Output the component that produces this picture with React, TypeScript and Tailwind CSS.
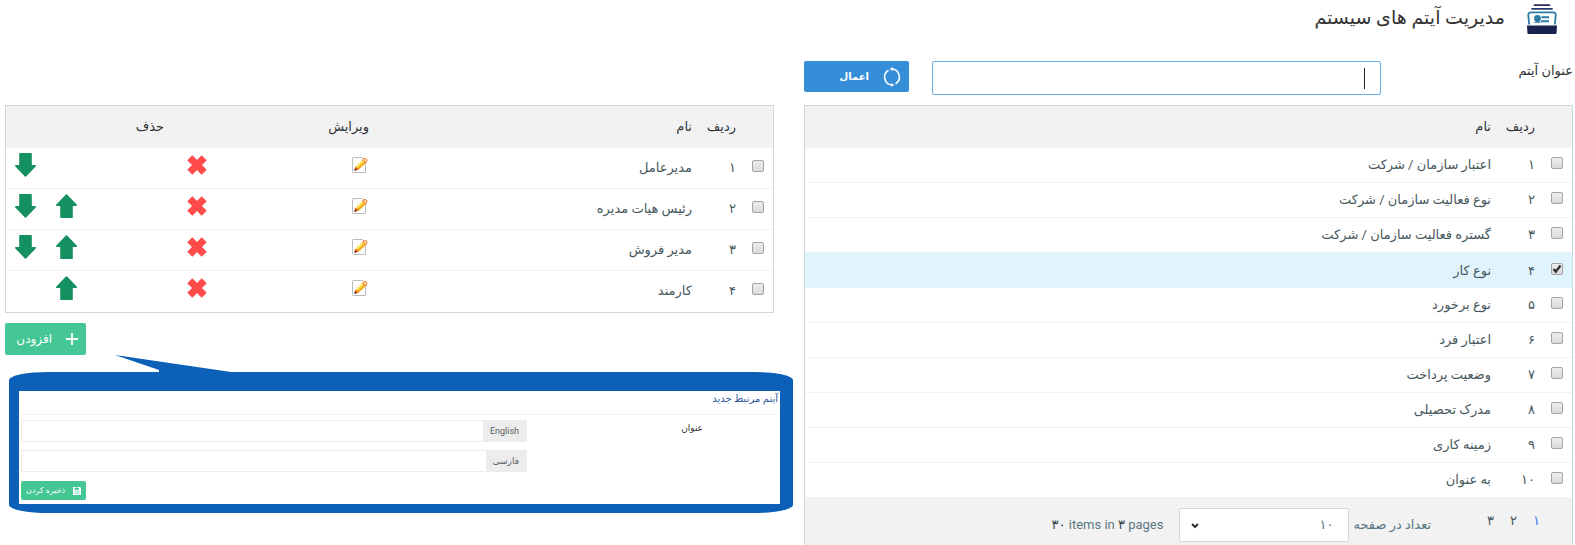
import { useState } from 'react';
import type { ReactNode } from 'react';

const items = [
  { no: '۱', name: 'اعتبار سازمان / شرکت' },
  { no: '۲', name: 'نوع فعالیت سازمان / شرکت' },
  { no: '۳', name: 'گستره فعالیت سازمان / شرکت' },
  { no: '۴', name: 'نوع کار' },
  { no: '۵', name: 'نوع برخورد' },
  { no: '۶', name: 'اعتبار فرد' },
  { no: '۷', name: 'وضعیت پرداخت' },
  { no: '۸', name: 'مدرک تحصیلی' },
  { no: '۹', name: 'زمینه کاری' },
  { no: '۱۰', name: 'به عنوان' },
];

const roles = [
  { no: '۱', name: 'مدیرعامل' },
  { no: '۲', name: 'رئیس هیات مدیره' },
  { no: '۳', name: 'مدیر فروش' },
  { no: '۴', name: 'کارمند' },
];

function CardBoxIcon() {
  return (
    <svg viewBox="0 0 30 30" className="h-[30px] w-[30px]" fill="none">
      <path d="M7.5 1.200h15" stroke="#2b2d63" strokeWidth="1.800" strokeLinecap="round" />
      <path d="M5 4.800h20" stroke="#2b3a6e" strokeWidth="1.800" strokeLinecap="round" />
      <path
        d="M2.200 20.500 1.300 11.500c-.2-2 .8-3.200 2.800-3.200h21.800c2 0 3 1.200 2.800 3.200l-.9 9"
        stroke="#2a7ba7"
        strokeWidth="1.800"
      />
      <circle cx="10.500" cy="14.500" r="3.400" fill="#2a7ba7" />
      <path d="M6.800 18.800c1-2 6.400-2 7.400 0z" fill="#2a7ba7" />
      <path d="M14.500 13.200h7.500M14 17.200h8" stroke="#2a7ba7" strokeWidth="1.900" />
      <path d="M0 21.500h30l-.4 7.300c-.1.800-.5 1.200-1.300 1.200H1.700c-.8 0-1.200-.4-1.300-1.200z" fill="#17224f" />
    </svg>
  );
}

function RefreshIcon() {
  return (
    <svg viewBox="0 0 18 20" className="h-5 w-[18px]" fill="none" stroke="#fff" strokeWidth="1.6">
      <path d="M5.500 3.200A8 8 0 0 0 9 18" />
      <path d="M12.500 16.800A8 8 0 0 0 9 2" />
      <path d="M9.600 0v4L6.800 2zM8.400 20v-4l2.800 2z" fill="#fff" stroke="none" />
    </svg>
  );
}

function EditIcon() {
  return (
    <svg viewBox="0 0 16 16" className="h-4 w-4">
      <path d="M1.200.5h9.300l3 3v12H1.200a.7.7 0 0 1-.7-.7V1.200a.7.7 0 0 1 .7-.7z" fill="#fdfdfd" stroke="#bdbdbd" />
      <path d="M3.300 9.800 10.500 2.800l3.200 3.200L6.400 12.800z" fill="#fbdc3c" />
      <path d="M5 11.600 12.400 4.600l1.300 1.400L6.400 12.800z" fill="#f5a623" />
      <path d="M4.200 9.800 11 3.300" stroke="#fdf29a" strokeWidth=".9" />
      <path d="m10.500 2.800 1.300-1c.9-.6 1.900-.4 2.600.2s.8 1.700.1 2.500L13.700 6z" fill="#fbd2a0" stroke="#f0762a" strokeWidth="1" />
      <path d="M3.300 9.800 2.500 13.500l3.900-.7-1-1.900z" fill="#e2571b" />
      <path d="m2.900 11.500-.5 2.200 2.300-.4z" fill="#2b1607" />
    </svg>
  );
}

function DeleteIcon() {
  return (
    <svg viewBox="0 0 20 20" className="h-5 w-5" stroke="#ff4b49" strokeWidth="7.200">
      <path d="m2.800 2.800 14.400 14.400M17.200 2.800 2.800 17.200" />
    </svg>
  );
}

function ArrowIcon({ down }: { down?: boolean }) {
  return (
    <svg viewBox="0 0 21 24" className={down ? 'h-6 w-[21px] rotate-180' : 'h-6 w-[21px]'}>
      <path
        d="M9.900.5q.6-.6 1.200 0L20.700 10.600c.5.600.3 1.400-.5 1.400h-3.400v11c0 .7-.3 1-1 1H5.200c-.7 0-1-.3-1-1V12H.8c-.8 0-1-.8-.5-1.400z"
        fill="#159060"
      />
    </svg>
  );
}

function SaveIcon() {
  return (
    <svg viewBox="0 0 8 8" className="h-2 w-2">
      <path d="M0 0h7l1 1v7H0z" fill="#fff" />
      <path d="M2 1h3.500v1.800H2zM1.500 4.800h5M1.500 6.300h5" fill="#44c695" stroke="#44c695" strokeWidth=".6" />
    </svg>
  );
}

function Checkbox({ label, checked, onChange }: { label: string; checked?: boolean; onChange?: () => void }) {
  return (
    <span className="relative block h-3 w-3">
      <input
        type="checkbox"
        aria-label={label}
        checked={checked}
        onChange={onChange}
        className="peer block h-3 w-3 appearance-none rounded-xs border border-[#a4a4a4] bg-linear-to-b from-[#ededed] to-[#dadada]"
      />
      <svg viewBox="0 0 12 12" className="pointer-events-none absolute inset-0 hidden h-3 w-3 peer-checked:block">
        <path d="m2.500 6 2.300 2.600L9.500 2.500" fill="none" stroke="#333" strokeWidth="2.300" />
      </svg>
    </span>
  );
}

function Th({ children, className = 'pr-[5px]' }: { children?: ReactNode; className?: string }) {
  return <th className={`${className} text-right font-normal text-[#2f3337]`}>{children}</th>;
}

function ItemsTable() {
  const [selected, setSelected] = useState('۴');

  return (
    <div className="mt-2.5 border border-b-0 border-[#cdd6d9]">
      <table className="w-full table-fixed border-separate border-spacing-0">
        <colgroup>
          <col className="w-8" />
          <col className="w-11" />
          <col />
        </colgroup>
        <thead>
          <tr className="h-[42px] bg-[#f2f2f2]">
            <Th />
            <Th>ردیف</Th>
            <Th>نام</Th>
          </tr>
        </thead>
        <tbody>
          {items.map((item) => (
            <tr
              key={item.no}
              className={
                item.no === selected
                  ? 'h-[35px] bg-[#e1f4fd]'
                  : 'h-[35px] *:border-b *:border-[#f2f2f2]'
              }
            >
              <td className="pr-[9px] pb-1">
                <Checkbox
                  label={item.name}
                  checked={item.no === selected}
                  onChange={() => setSelected(item.no)}
                />
              </td>
              <td className="pr-[5px]">{item.no}</td>
              <td className="pr-[5px]">{item.name}</td>
            </tr>
          ))}
        </tbody>
      </table>

      {/* Pager */}
      <div className="flex h-[47px] items-center bg-[#f2f2f2] pt-1.5 pr-8 text-[#5b7783]">
        <nav className="flex gap-4 pb-2 text-[#46575d]">
          <a href="#1" className="text-[#3b78e7]">۱</a>
          <a href="#2">۲</a>
          <a href="#3">۳</a>
        </nav>
        <label htmlFor="page-size" className="mr-14">تعداد در صفحه</label>
        <div className="relative mr-1">
          <select
            id="page-size"
            className="block h-[34px] w-[170px] appearance-none rounded-xs border border-[#d5d8da] bg-white pr-[15px]"
          >
            <option>۱۰</option>
            <option>۲۰</option>
            <option>۵۰</option>
          </select>
          <svg viewBox="0 0 8 6" className="pointer-events-none absolute top-[15px] left-3 h-1.5 w-2">
            <path d="m1 1 3 3 3-3" fill="none" stroke="#222" strokeWidth="1.800" />
          </svg>
        </div>
        <p dir="ltr" className="mr-4">
          <span className="text-[#37474f]">۳۰</span> items in <span className="text-[#37474f]">۳</span> pages
        </p>
      </div>
    </div>
  );
}

function RolesTable() {
  return (
    <div className="border border-[#cdd6d9]">
      <table className="w-full table-fixed border-separate border-spacing-0">
        <colgroup>
          <col className="w-8" />
          <col className="w-11" />
          <col />
          <col className="w-[162px]" />
          <col className="w-[125px]" />
          <col className="w-[41px]" />
          <col className="w-[40px]" />
        </colgroup>
        <thead>
          <tr className="h-[42px] bg-[#f2f2f2]">
            <Th />
            <Th>ردیف</Th>
            <Th>نام</Th>
            <Th>ویرایش</Th>
            <Th className="pr-12">حذف</Th>
            <Th />
            <Th />
          </tr>
        </thead>
        <tbody>
          {roles.map((role, i) => (
            <tr key={role.no} className="h-[41px] *:border-b *:border-[#f2f2f2] last:*:border-transparent">
              <td className="pr-[9px] pb-1">
                <Checkbox label={role.name} />
              </td>
              <td className="pr-[5px]">{role.no}</td>
              <td className="pr-[5px]">{role.name}</td>
              <td className="pr-[6px] pb-1.5">
                <button type="button" aria-label="ویرایش" className="block"><EditIcon /></button>
              </td>
              <td className="pr-[5px] pb-1.5">
                <button type="button" aria-label="حذف" className="block"><DeleteIcon /></button>
              </td>
              <td className="pr-2.5 pb-1.5">
                {i > 0 && <button type="button" aria-label="بالا" className="block"><ArrowIcon /></button>}
              </td>
              <td className="pr-2.5 pb-1.5">
                {i < roles.length - 1 && (
                  <button type="button" aria-label="پایین" className="block"><ArrowIcon down /></button>
                )}
              </td>
            </tr>
          ))}
        </tbody>
      </table>
    </div>
  );
}

function TitleField({ id, lang }: { id: string; lang: string }) {
  return (
    <div className="flex h-[22px] border border-[#ececec]">
      <label htmlFor={id} className="flex items-center bg-[#ececec] px-[7px] text-[#5a5f63]">{lang}</label>
      <input id={id} className="min-w-0 flex-1 bg-white px-2 outline-none" />
    </div>
  );
}

function NewItemCallout() {
  return (
    <div className="relative mt-[17px] -mr-[19px] ml-1 rounded-[40px/8px] bg-[#0c60b8] pt-[19px] pr-[13px] pb-[9px] pl-2.5 text-[9px]">
      {/* Pointer towards the add button */}
      <svg viewBox="0 0 116 18" className="absolute -top-[17px] left-[106px] h-[18px] w-[116px]">
        <path d="M0 0 116 17v1H44v-3z" fill="#0c60b8" />
      </svg>
      <form className="bg-white pb-1" onSubmit={(e) => e.preventDefault()}>
        <h2 className="mx-0.5 h-6 border-b border-[#f0f0f0] text-[10px] leading-4 text-[#2b569a]">آیتم مرتبط جدید</h2>
        <div className="grid grid-cols-3 pt-[5px] pl-0.5">
          <label htmlFor="title-en" className="pr-[77px] leading-4 text-[#333]">عنوان</label>
          <div className="col-span-2 grid gap-2">
            <TitleField id="title-en" lang="English" />
            <TitleField id="title-fa" lang="فارسی" />
          </div>
        </div>
        <div className="flex justify-end pt-[9px] pl-0.5">
          <button type="submit" className="flex h-[19px] items-center gap-2 rounded-xs bg-[#44c695] px-[5px] text-[8px] text-white">
            <SaveIcon />
            ذخیره کردن
          </button>
        </div>
      </form>
    </div>
  );
}

export default function App() {
  return (
    <div
      dir="rtl"
      className="grid grid-cols-2 gap-[30px] overflow-hidden bg-white pr-0.5 pl-[5px] font-['Roboto','DejaVu_Sans',sans-serif] text-[13px] leading-5 text-[#46575d]"
    >
      <section>
        <header className="flex h-[61px] items-start gap-[22px] pt-1 pr-4">
          <CardBoxIcon />
          <h1 className="text-[19px] leading-7 text-[#333]">مدیریت آیتم های سیستم</h1>
        </header>
        <form className="flex items-start" onSubmit={(e) => e.preventDefault()}>
          <label htmlFor="item-title" className="w-1/4 text-[#333]">عنوان آیتم</label>
          <div className="relative flex-1">
            <input
              id="item-title"
              className="block h-[34px] w-full rounded-xs border border-[#66afe9] bg-white px-4 caret-transparent outline-none"
            />
            <span className="absolute top-[7px] right-4 h-[21px] w-px bg-[#222]" />
          </div>
          <button
            type="submit"
            className="mr-[23px] flex h-[31px] w-[105px] items-center gap-3.5 rounded-xs bg-[#368ed8] pr-2 text-white"
          >
            <RefreshIcon />
            <span className="text-[10px] font-bold">اعمال</span>
          </button>
        </form>
        <ItemsTable />
      </section>

      <section className="pt-[105px]">
        <RolesTable />
        <div className="mt-2.5 flex justify-end">
          <button
            type="button"
            className="flex h-8 w-[81px] items-center gap-3.5 rounded-xs bg-[#44c695] pr-2 text-xs text-white"
          >
            <svg viewBox="0 0 12 12" className="h-3 w-3">
              <path d="M6 0v12M0 6h12" stroke="#fff" strokeWidth="1.800" />
            </svg>
            افزودن
          </button>
        </div>
        <NewItemCallout />
      </section>
    </div>
  );
}
